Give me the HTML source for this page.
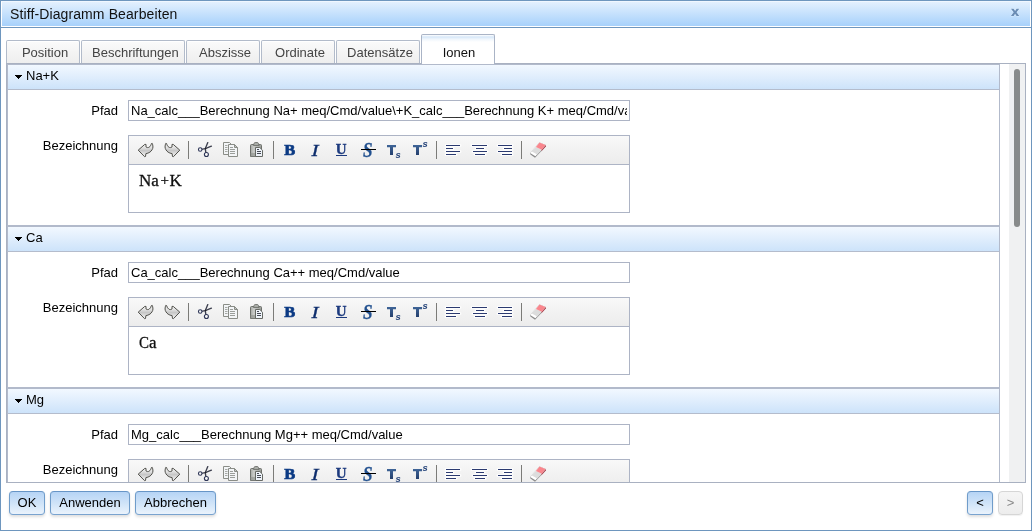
<!DOCTYPE html>
<html>
<head>
<meta charset="utf-8">
<title>Stiff-Diagramm Bearbeiten</title>
<style>
html,body{margin:0;padding:0;}
body{width:1032px;height:531px;overflow:hidden;background:#fff;font-family:"Liberation Sans",sans-serif;font-size:13px;color:#000;position:relative;}
*{box-sizing:border-box;}
#root{position:absolute;left:0;top:0;width:1032px;height:531px;overflow:hidden;will-change:transform;background:#fff;}
#dlg{position:absolute;left:0;top:0;width:1032px;height:531px;border:1px solid #6e96be;background:#fff;}
#title{position:absolute;left:1px;top:1px;width:1030px;height:26px;border:1px solid #fff;border-top-color:#f0f7ff;background:linear-gradient(to bottom,#e3f0fe 0%,#a7d1fb 100%);background-clip:padding-box;}
#titleline{position:absolute;left:1px;top:27px;width:1030px;height:1px;background:#6e96be;}
#titletext{position:absolute;left:10px;top:6px;font-size:14px;line-height:17px;color:#111;white-space:nowrap;letter-spacing:0.11px;}
#close{position:absolute;left:1009px;top:6px;width:12px;height:12px;overflow:visible;}
.tab{position:absolute;top:40px;height:23px;border:1px solid #b2bbca;border-bottom:none;border-radius:2px 2px 0 0;background:linear-gradient(to bottom,#fbfbfb 0%,#f4f4f4 50%,#eeeeee 100%);color:#444;font-size:13px;line-height:15px;padding:4px 6px 0 10px;text-align:center;white-space:nowrap;box-shadow:inset 0 1px 0 rgba(255,255,255,0.85);}
.tab.act{padding-left:9px;padding-right:7px;top:34px;height:30px;background:linear-gradient(to bottom,#fff 0px,#d6e7f8 2px,#eef5fc 4px,#fff 7px,#fff 100%);color:#111;padding-top:10px;border-color:#aab4c6;z-index:3;box-shadow:none;}
#pane{position:absolute;left:6px;top:63px;width:1020px;height:420px;border:1px solid #a9b1c1;background:#fff;overflow:hidden;}
.sec{position:absolute;left:0;width:993px;height:162px;border:1px solid #b2bacb;background:#fff;}
.sec .hd{position:absolute;left:0;top:0;width:991px;height:25px;border-bottom:1px solid #b4bccc;background:linear-gradient(to bottom,#f2f8ff 0%,#cde3fa 100%);}
.sec .tri{position:absolute;left:7px;top:10px;width:7px;height:4px;}
.sec .ht{position:absolute;left:18px;top:3px;line-height:15px;font-size:13px;white-space:nowrap;}
.lbl{position:absolute;left:0;width:110px;text-align:right;font-size:13px;line-height:15px;white-space:nowrap;}
.inp{position:absolute;left:120px;top:35px;width:502px;height:21px;border:1px solid #adb4c5;background:#fff;padding:2px 2px 0 2px;font-size:13px;line-height:15px;white-space:nowrap;overflow:hidden;}
.inp span{display:block;overflow:hidden;width:496px;}
.ed{position:absolute;left:120px;top:70px;width:502px;height:78px;border:1px solid #adb4c5;background:#fff;}
.tb{position:absolute;left:0;top:0;width:500px;height:29px;border-bottom:1px solid #adb4c5;background:linear-gradient(to bottom,#f9f9f9 0%,#f2f2f2 50%,#ececec 100%);}
.edt{position:absolute;left:10px;top:35px;font-family:"Liberation Serif",serif;font-size:17px;line-height:20px;color:#111;white-space:nowrap;-webkit-text-stroke:0.3px #111;transform:scaleY(1.04);transform-origin:0 15.75px;}
.sep{position:absolute;top:5px;width:1px;height:18px;background:#7b7b78;}
.ic{position:absolute;top:6px;width:16px;height:16px;overflow:visible;}
.btn{position:absolute;top:491px;height:24px;border:1px solid #6f9cca;border-color:#6795c6 #6f9cca #79a3cf;border-radius:4px;background:linear-gradient(to bottom,#b6d4f5 0%,#cfe3f8 50%,#eaf3fc 100%);font-size:13px;line-height:15px;text-align:center;padding-top:3px;box-shadow:0 2px 3px rgba(0,0,0,0.13);color:#000;}
#sbtrack{position:absolute;left:1002px;top:0;width:16px;height:418px;background:#f0f1f2;}
#sbthumb{position:absolute;left:1007px;top:5px;width:6px;height:158px;border-radius:3px;background:#888b8b;}
</style>
</head>
<body>
<div id="root">
<svg width="0" height="0" style="position:absolute;left:-100px;top:-100px;">
<defs>
<linearGradient id="gArrow" x1="0" y1="0" x2="0" y2="1"><stop offset="0" stop-color="#ffffff"/><stop offset="0.3" stop-color="#e4e4e4"/><stop offset="0.55" stop-color="#c6c6c6"/><stop offset="0.75" stop-color="#dedede"/><stop offset="1" stop-color="#f0f0f0"/></linearGradient>
<linearGradient id="gT" x1="0" y1="0" x2="0" y2="1"><stop offset="0" stop-color="#3f6598"/><stop offset="1" stop-color="#243f6d"/></linearGradient>
<linearGradient id="gClip" x1="0" y1="0" x2="1" y2="0"><stop offset="0" stop-color="#a4a7a3"/><stop offset="0.3" stop-color="#c9cbc8"/><stop offset="1" stop-color="#9a9d98"/></linearGradient>
</defs>
</svg>
<div id="dlg"></div>
<div id="title"></div>
<div id="titleline"></div>
<div id="titletext">Stiff-Diagramm Bearbeiten</div>
<svg id="close" width="12" height="12" viewBox="0 0 12 12"><path transform="translate(1.9,2.75)" d="M0,0 H2.7 L4.2,2.3 L5.7,0 H8.4 L5.6,3.6 L8.4,7.3 H5.7 L4.2,4.9 L2.7,7.3 H0 L2.8,3.6 Z" fill="#6a8cb4" stroke="#fff" stroke-opacity="0.5" stroke-width="0.9" paint-order="stroke"/></svg>

<div class="tab" style="left:6px;width:74px;">Position</div>
<div class="tab" style="left:81px;width:104px;">Beschriftungen</div>
<div class="tab" style="left:186px;width:74px;">Abszisse</div>
<div class="tab" style="left:261px;width:74px;">Ordinate</div>
<div class="tab" style="left:336px;width:84px;">Datensätze</div>

<div id="pane">
  <div class="sec" style="top:0px;" id="s1">
<div class="hd"><svg class="tri" width="7" height="4" viewBox="0 0 7 4" shape-rendering="crispEdges"><path d="M0,0H7V1H6V2H5V3H4V4H3V3H2V2H1V1H0Z" fill="#000"/></svg><div class="ht">Na+K</div></div><div class="lbl" style="top:38px;">Pfad</div><div class="inp"><span>Na_calc___Berechnung Na+ meq/Cmd/value\+K_calc___Berechnung K+ meq/Cmd/value</span></div><div class="lbl" style="top:73px;">Bezeichnung</div><div class="ed"><div class="tb"><svg class="ic" style="left:9px" width="16" height="16" viewBox="0 0 16 16"><path d="M0.2,8.15 L6.8,2.4 L8.0,2.4 L8.0,5.0 C9.0,5.7 10.2,5.7 11.0,5.3 C12.2,4.6 13.0,3.2 13.35,1.7 L14.05,1.15 C14.6,2.0 15.0,3.5 14.95,5.0 C14.9,6.0 14.6,6.9 14.05,7.8 C13.5,8.7 12.8,9.5 11.95,10.1 C10.8,10.9 9.4,11.4 7.9,11.6 L7.5,14.5 L6.6,14.7 Z" fill="url(#gArrow)" stroke="#50504b" stroke-width="1" stroke-linejoin="miter"/></svg><svg class="ic" style="left:35px" width="16" height="16" viewBox="0 0 16 16"><g transform="translate(16,0) scale(-1,1)"><path d="M0.2,8.15 L6.8,2.4 L8.0,2.4 L8.0,5.0 C9.0,5.7 10.2,5.7 11.0,5.3 C12.2,4.6 13.0,3.2 13.35,1.7 L14.05,1.15 C14.6,2.0 15.0,3.5 14.95,5.0 C14.9,6.0 14.6,6.9 14.05,7.8 C13.5,8.7 12.8,9.5 11.95,10.1 C10.8,10.9 9.4,11.4 7.9,11.6 L7.5,14.5 L6.6,14.7 Z" fill="url(#gArrow)" stroke="#50504b" stroke-width="1" stroke-linejoin="miter"/></g></svg><svg class="ic" style="left:68px" width="16" height="16" viewBox="0 0 16 16"><path d="M8.8,10.3 L8.3,6.6 L10.8,0.6" fill="none" stroke="#3c3f4e" stroke-width="1.35" stroke-linecap="round"/><path d="M5.5,7.2 L8.3,6.6 L14.4,4.2" fill="none" stroke="#3c3f4e" stroke-width="1.35" stroke-linecap="round"/><circle cx="8.5" cy="6.5" r="0.8" fill="#1c1c22"/><circle cx="3.2" cy="7.5" r="1.75" fill="#f6f6f6" stroke="#2d3557" stroke-width="1.1"/><circle cx="9.4" cy="12.5" r="2.0" fill="#f6f6f6" stroke="#2d3557" stroke-width="1.1"/></svg><svg class="ic" style="left:94px" width="16" height="16" viewBox="0 0 16 16"><path d="M0.5,0.5 H6.5 L8.5,2.5 V12.5 H0.5 Z" fill="#f3f5f7" stroke="#8a8d87" stroke-width="1"/><path d="M2,3.5 H4.5 M2,5.5 H4.5 M2,7.5 H4.5 M2,9.5 H4.5" stroke="#a6a9a5" stroke-width="1"/><path d="M5.5,2.5 H11.5 L14.5,5.5 V14.5 H5.5 Z" fill="#f3f5f7" stroke="#8a8d87" stroke-width="1"/><path d="M11.5,2.5 V5.5 H14.5 Z" fill="#c6c9c5" stroke="#8a8d87" stroke-width="1" stroke-linejoin="round"/><path d="M7,5.5 H10 M7,7.5 H12 M7,9.5 H12 M7,11.5 H12" stroke="#9b9e9a" stroke-width="1"/></svg><svg class="ic" style="left:120px" width="16" height="16" viewBox="0 0 16 16"><path d="M2.5,2.5 H11.5 Q12.5,2.5 12.5,3.5 V14.5 H1.5 V3.5 Q1.5,2.5 2.5,2.5 Z" fill="url(#gClip)" stroke="#6d706b" stroke-width="1"/><path d="M1.5,11 H7 V14.5 H1.5 Z" fill="#8e918c" opacity="0.6"/><path d="M4.4,3.5 L5.2,1.2 Q5.4,0.5 6.2,0.5 H8.3 Q9.1,0.5 9.3,1.2 L10.1,3.5 Z" fill="#a9aca7" stroke="#6f726d" stroke-width="0.9"/><path d="M6.5,5.5 H10.8 L13.5,8.2 V14.5 H6.5 Z" fill="#eef3f9" stroke="#666964" stroke-width="1"/><path d="M8,7.5 H10 M8,9.5 H12 M8,11.5 H12" stroke="#474b55" stroke-width="1"/></svg><svg class="ic" style="left:153px" width="16" height="16" viewBox="0 0 16 16"><g transform="translate(2.2,0) scale(1.06,1)"><text x="0" y="13.0" font-family="Liberation Serif, serif" font-weight="bold" font-size="15.5" fill="#0b3a84" stroke="#0b3a84" stroke-width="0.7">B</text></g></svg><svg class="ic" style="left:179px" width="16" height="16" viewBox="0 0 16 16"><g transform="translate(3.6,0) scale(1.25,1)"><text x="0" y="13.7" font-family="Liberation Serif, serif" font-style="italic" font-size="17" fill="#0d2d6c" stroke="#0d2d6c" stroke-width="0.3">I</text></g></svg><svg class="ic" style="left:205px" width="16" height="16" viewBox="0 0 16 16"><text x="1.7" y="11.8" font-family="Liberation Serif, serif" font-weight="bold" font-size="15" fill="#1c3a7e" stroke="#1c3a7e" stroke-width="0.35">U</text><rect x="2" y="13" width="11" height="1" fill="#1c3a7e"/></svg><svg class="ic" style="left:231px" width="16" height="16" viewBox="0 0 16 16"><g transform="translate(3,0) scale(0.86,1)"><text x="0" y="14.7" font-family="Liberation Serif, serif" font-style="italic" font-weight="bold" font-size="20" fill="#21508f" stroke="#21508f" stroke-width="0.3">S</text></g><rect x="1" y="7" width="15" height="1" fill="#000"/></svg><svg class="ic" style="left:257px" width="16" height="16" viewBox="0 0 16 16"><path d="M1,3 H10 V5.3 H7 V13 H4 V5.3 H1 Z" fill="url(#gT)"/><text x="9.6" y="15.9" font-family="Liberation Sans, sans-serif" font-style="italic" font-weight="bold" font-size="9.5" fill="#27457a">s</text></svg><svg class="ic" style="left:283px" width="16" height="16" viewBox="0 0 16 16"><path d="M1,3 H10 V5.3 H7 V13 H4 V5.3 H1 Z" fill="url(#gT)"/><text x="10.6" y="4.9" font-family="Liberation Sans, sans-serif" font-style="italic" font-weight="bold" font-size="9.5" fill="#27457a">s</text></svg><svg class="ic" style="left:316px" width="16" height="16" viewBox="0 0 16 16"><path d="M0,2.5H16V4.5H0Z M0,5.5H9V7.5H0Z M0,8.5H16V10.5H0Z M0,11.5H12V13.5H0Z" fill="#fff" opacity="0.0"/><path d="M1,3.5H15 M1,6.5H8 M1,9.5H15 M1,12.5H11" stroke="#fff" stroke-width="3" stroke-linecap="round" opacity="0.8"/><path d="M1,3.5H15 M1,6.5H8 M1,9.5H15 M1,12.5H11" stroke="#2b3a70" stroke-width="1"/></svg><svg class="ic" style="left:342px" width="16" height="16" viewBox="0 0 16 16"><path d="M1,3.5H16 M5,6.5H13 M2,9.5H16 M4,12.5H14" stroke="#fff" stroke-width="3" stroke-linecap="round" opacity="0.8"/><path d="M1,3.5H16 M5,6.5H13 M2,9.5H16 M4,12.5H14" stroke="#2b3a70" stroke-width="1"/></svg><svg class="ic" style="left:368px" width="16" height="16" viewBox="0 0 16 16"><path d="M1,3.5H15 M7,6.5H15 M1,9.5H15 M5,12.5H15" stroke="#fff" stroke-width="3" stroke-linecap="round" opacity="0.8"/><path d="M1,3.5H15 M7,6.5H15 M1,9.5H15 M5,12.5H15" stroke="#2b3a70" stroke-width="1"/></svg><svg class="ic" style="left:401px" width="16" height="16" viewBox="0 0 16 16"><path d="M9.5,0.4 L15.8,3.1 L15.8,4.6 L5.0,15.7 L0.4,12.6 L0.1,10.9 Z" fill="#8d8d8d"/><path d="M15.8,3.1 L15.8,4.6 L11.4,9.2 L11.6,7.7 Z" fill="#b2404e"/><path d="M9.5,0.4 L15.6,3.0 L5.4,14.2 L0.1,10.9 Z" fill="#fff"/><path d="M5.9,5.0 L11.7,7.7 L7.3,12.4 L1.4,9.3 Z" fill="#dcdcdc"/><path d="M9.5,0.4 L15.6,3.0 L11.7,7.7 L5.9,5.0 Z" fill="#f9868d"/></svg><div class="sep" style="left:59px"></div><div class="sep" style="left:144px"></div><div class="sep" style="left:307px"></div><div class="sep" style="left:392px"></div></div><div class="edt">Na<span style="font-size:15px;position:relative;top:-1px;margin:0 0.5px 0 1.7px;">+</span>K</div></div>
</div>
  <div class="sec" style="top:162px;" id="s2">
<div class="hd"><svg class="tri" width="7" height="4" viewBox="0 0 7 4" shape-rendering="crispEdges"><path d="M0,0H7V1H6V2H5V3H4V4H3V3H2V2H1V1H0Z" fill="#000"/></svg><div class="ht">Ca</div></div><div class="lbl" style="top:38px;">Pfad</div><div class="inp"><span>Ca_calc___Berechnung Ca++ meq/Cmd/value</span></div><div class="lbl" style="top:73px;">Bezeichnung</div><div class="ed"><div class="tb"><svg class="ic" style="left:9px" width="16" height="16" viewBox="0 0 16 16"><path d="M0.2,8.15 L6.8,2.4 L8.0,2.4 L8.0,5.0 C9.0,5.7 10.2,5.7 11.0,5.3 C12.2,4.6 13.0,3.2 13.35,1.7 L14.05,1.15 C14.6,2.0 15.0,3.5 14.95,5.0 C14.9,6.0 14.6,6.9 14.05,7.8 C13.5,8.7 12.8,9.5 11.95,10.1 C10.8,10.9 9.4,11.4 7.9,11.6 L7.5,14.5 L6.6,14.7 Z" fill="url(#gArrow)" stroke="#50504b" stroke-width="1" stroke-linejoin="miter"/></svg><svg class="ic" style="left:35px" width="16" height="16" viewBox="0 0 16 16"><g transform="translate(16,0) scale(-1,1)"><path d="M0.2,8.15 L6.8,2.4 L8.0,2.4 L8.0,5.0 C9.0,5.7 10.2,5.7 11.0,5.3 C12.2,4.6 13.0,3.2 13.35,1.7 L14.05,1.15 C14.6,2.0 15.0,3.5 14.95,5.0 C14.9,6.0 14.6,6.9 14.05,7.8 C13.5,8.7 12.8,9.5 11.95,10.1 C10.8,10.9 9.4,11.4 7.9,11.6 L7.5,14.5 L6.6,14.7 Z" fill="url(#gArrow)" stroke="#50504b" stroke-width="1" stroke-linejoin="miter"/></g></svg><svg class="ic" style="left:68px" width="16" height="16" viewBox="0 0 16 16"><path d="M8.8,10.3 L8.3,6.6 L10.8,0.6" fill="none" stroke="#3c3f4e" stroke-width="1.35" stroke-linecap="round"/><path d="M5.5,7.2 L8.3,6.6 L14.4,4.2" fill="none" stroke="#3c3f4e" stroke-width="1.35" stroke-linecap="round"/><circle cx="8.5" cy="6.5" r="0.8" fill="#1c1c22"/><circle cx="3.2" cy="7.5" r="1.75" fill="#f6f6f6" stroke="#2d3557" stroke-width="1.1"/><circle cx="9.4" cy="12.5" r="2.0" fill="#f6f6f6" stroke="#2d3557" stroke-width="1.1"/></svg><svg class="ic" style="left:94px" width="16" height="16" viewBox="0 0 16 16"><path d="M0.5,0.5 H6.5 L8.5,2.5 V12.5 H0.5 Z" fill="#f3f5f7" stroke="#8a8d87" stroke-width="1"/><path d="M2,3.5 H4.5 M2,5.5 H4.5 M2,7.5 H4.5 M2,9.5 H4.5" stroke="#a6a9a5" stroke-width="1"/><path d="M5.5,2.5 H11.5 L14.5,5.5 V14.5 H5.5 Z" fill="#f3f5f7" stroke="#8a8d87" stroke-width="1"/><path d="M11.5,2.5 V5.5 H14.5 Z" fill="#c6c9c5" stroke="#8a8d87" stroke-width="1" stroke-linejoin="round"/><path d="M7,5.5 H10 M7,7.5 H12 M7,9.5 H12 M7,11.5 H12" stroke="#9b9e9a" stroke-width="1"/></svg><svg class="ic" style="left:120px" width="16" height="16" viewBox="0 0 16 16"><path d="M2.5,2.5 H11.5 Q12.5,2.5 12.5,3.5 V14.5 H1.5 V3.5 Q1.5,2.5 2.5,2.5 Z" fill="url(#gClip)" stroke="#6d706b" stroke-width="1"/><path d="M1.5,11 H7 V14.5 H1.5 Z" fill="#8e918c" opacity="0.6"/><path d="M4.4,3.5 L5.2,1.2 Q5.4,0.5 6.2,0.5 H8.3 Q9.1,0.5 9.3,1.2 L10.1,3.5 Z" fill="#a9aca7" stroke="#6f726d" stroke-width="0.9"/><path d="M6.5,5.5 H10.8 L13.5,8.2 V14.5 H6.5 Z" fill="#eef3f9" stroke="#666964" stroke-width="1"/><path d="M8,7.5 H10 M8,9.5 H12 M8,11.5 H12" stroke="#474b55" stroke-width="1"/></svg><svg class="ic" style="left:153px" width="16" height="16" viewBox="0 0 16 16"><g transform="translate(2.2,0) scale(1.06,1)"><text x="0" y="13.0" font-family="Liberation Serif, serif" font-weight="bold" font-size="15.5" fill="#0b3a84" stroke="#0b3a84" stroke-width="0.7">B</text></g></svg><svg class="ic" style="left:179px" width="16" height="16" viewBox="0 0 16 16"><g transform="translate(3.6,0) scale(1.25,1)"><text x="0" y="13.7" font-family="Liberation Serif, serif" font-style="italic" font-size="17" fill="#0d2d6c" stroke="#0d2d6c" stroke-width="0.3">I</text></g></svg><svg class="ic" style="left:205px" width="16" height="16" viewBox="0 0 16 16"><text x="1.7" y="11.8" font-family="Liberation Serif, serif" font-weight="bold" font-size="15" fill="#1c3a7e" stroke="#1c3a7e" stroke-width="0.35">U</text><rect x="2" y="13" width="11" height="1" fill="#1c3a7e"/></svg><svg class="ic" style="left:231px" width="16" height="16" viewBox="0 0 16 16"><g transform="translate(3,0) scale(0.86,1)"><text x="0" y="14.7" font-family="Liberation Serif, serif" font-style="italic" font-weight="bold" font-size="20" fill="#21508f" stroke="#21508f" stroke-width="0.3">S</text></g><rect x="1" y="7" width="15" height="1" fill="#000"/></svg><svg class="ic" style="left:257px" width="16" height="16" viewBox="0 0 16 16"><path d="M1,3 H10 V5.3 H7 V13 H4 V5.3 H1 Z" fill="url(#gT)"/><text x="9.6" y="15.9" font-family="Liberation Sans, sans-serif" font-style="italic" font-weight="bold" font-size="9.5" fill="#27457a">s</text></svg><svg class="ic" style="left:283px" width="16" height="16" viewBox="0 0 16 16"><path d="M1,3 H10 V5.3 H7 V13 H4 V5.3 H1 Z" fill="url(#gT)"/><text x="10.6" y="4.9" font-family="Liberation Sans, sans-serif" font-style="italic" font-weight="bold" font-size="9.5" fill="#27457a">s</text></svg><svg class="ic" style="left:316px" width="16" height="16" viewBox="0 0 16 16"><path d="M0,2.5H16V4.5H0Z M0,5.5H9V7.5H0Z M0,8.5H16V10.5H0Z M0,11.5H12V13.5H0Z" fill="#fff" opacity="0.0"/><path d="M1,3.5H15 M1,6.5H8 M1,9.5H15 M1,12.5H11" stroke="#fff" stroke-width="3" stroke-linecap="round" opacity="0.8"/><path d="M1,3.5H15 M1,6.5H8 M1,9.5H15 M1,12.5H11" stroke="#2b3a70" stroke-width="1"/></svg><svg class="ic" style="left:342px" width="16" height="16" viewBox="0 0 16 16"><path d="M1,3.5H16 M5,6.5H13 M2,9.5H16 M4,12.5H14" stroke="#fff" stroke-width="3" stroke-linecap="round" opacity="0.8"/><path d="M1,3.5H16 M5,6.5H13 M2,9.5H16 M4,12.5H14" stroke="#2b3a70" stroke-width="1"/></svg><svg class="ic" style="left:368px" width="16" height="16" viewBox="0 0 16 16"><path d="M1,3.5H15 M7,6.5H15 M1,9.5H15 M5,12.5H15" stroke="#fff" stroke-width="3" stroke-linecap="round" opacity="0.8"/><path d="M1,3.5H15 M7,6.5H15 M1,9.5H15 M5,12.5H15" stroke="#2b3a70" stroke-width="1"/></svg><svg class="ic" style="left:401px" width="16" height="16" viewBox="0 0 16 16"><path d="M9.5,0.4 L15.8,3.1 L15.8,4.6 L5.0,15.7 L0.4,12.6 L0.1,10.9 Z" fill="#8d8d8d"/><path d="M15.8,3.1 L15.8,4.6 L11.4,9.2 L11.6,7.7 Z" fill="#b2404e"/><path d="M9.5,0.4 L15.6,3.0 L5.4,14.2 L0.1,10.9 Z" fill="#fff"/><path d="M5.9,5.0 L11.7,7.7 L7.3,12.4 L1.4,9.3 Z" fill="#dcdcdc"/><path d="M9.5,0.4 L15.6,3.0 L11.7,7.7 L5.9,5.0 Z" fill="#f9868d"/></svg><div class="sep" style="left:59px"></div><div class="sep" style="left:144px"></div><div class="sep" style="left:307px"></div><div class="sep" style="left:392px"></div></div><div class="edt"><span style="display:inline-block;transform:scaleX(0.88);transform-origin:0 0;margin-right:-1.3px;">C</span>a</div></div>
</div>
  <div class="sec" style="top:324px;" id="s3">
<div class="hd"><svg class="tri" width="7" height="4" viewBox="0 0 7 4" shape-rendering="crispEdges"><path d="M0,0H7V1H6V2H5V3H4V4H3V3H2V2H1V1H0Z" fill="#000"/></svg><div class="ht">Mg</div></div><div class="lbl" style="top:38px;">Pfad</div><div class="inp"><span>Mg_calc___Berechnung Mg++ meq/Cmd/value</span></div><div class="lbl" style="top:73px;">Bezeichnung</div><div class="ed"><div class="tb"><svg class="ic" style="left:9px" width="16" height="16" viewBox="0 0 16 16"><path d="M0.2,8.15 L6.8,2.4 L8.0,2.4 L8.0,5.0 C9.0,5.7 10.2,5.7 11.0,5.3 C12.2,4.6 13.0,3.2 13.35,1.7 L14.05,1.15 C14.6,2.0 15.0,3.5 14.95,5.0 C14.9,6.0 14.6,6.9 14.05,7.8 C13.5,8.7 12.8,9.5 11.95,10.1 C10.8,10.9 9.4,11.4 7.9,11.6 L7.5,14.5 L6.6,14.7 Z" fill="url(#gArrow)" stroke="#50504b" stroke-width="1" stroke-linejoin="miter"/></svg><svg class="ic" style="left:35px" width="16" height="16" viewBox="0 0 16 16"><g transform="translate(16,0) scale(-1,1)"><path d="M0.2,8.15 L6.8,2.4 L8.0,2.4 L8.0,5.0 C9.0,5.7 10.2,5.7 11.0,5.3 C12.2,4.6 13.0,3.2 13.35,1.7 L14.05,1.15 C14.6,2.0 15.0,3.5 14.95,5.0 C14.9,6.0 14.6,6.9 14.05,7.8 C13.5,8.7 12.8,9.5 11.95,10.1 C10.8,10.9 9.4,11.4 7.9,11.6 L7.5,14.5 L6.6,14.7 Z" fill="url(#gArrow)" stroke="#50504b" stroke-width="1" stroke-linejoin="miter"/></g></svg><svg class="ic" style="left:68px" width="16" height="16" viewBox="0 0 16 16"><path d="M8.8,10.3 L8.3,6.6 L10.8,0.6" fill="none" stroke="#3c3f4e" stroke-width="1.35" stroke-linecap="round"/><path d="M5.5,7.2 L8.3,6.6 L14.4,4.2" fill="none" stroke="#3c3f4e" stroke-width="1.35" stroke-linecap="round"/><circle cx="8.5" cy="6.5" r="0.8" fill="#1c1c22"/><circle cx="3.2" cy="7.5" r="1.75" fill="#f6f6f6" stroke="#2d3557" stroke-width="1.1"/><circle cx="9.4" cy="12.5" r="2.0" fill="#f6f6f6" stroke="#2d3557" stroke-width="1.1"/></svg><svg class="ic" style="left:94px" width="16" height="16" viewBox="0 0 16 16"><path d="M0.5,0.5 H6.5 L8.5,2.5 V12.5 H0.5 Z" fill="#f3f5f7" stroke="#8a8d87" stroke-width="1"/><path d="M2,3.5 H4.5 M2,5.5 H4.5 M2,7.5 H4.5 M2,9.5 H4.5" stroke="#a6a9a5" stroke-width="1"/><path d="M5.5,2.5 H11.5 L14.5,5.5 V14.5 H5.5 Z" fill="#f3f5f7" stroke="#8a8d87" stroke-width="1"/><path d="M11.5,2.5 V5.5 H14.5 Z" fill="#c6c9c5" stroke="#8a8d87" stroke-width="1" stroke-linejoin="round"/><path d="M7,5.5 H10 M7,7.5 H12 M7,9.5 H12 M7,11.5 H12" stroke="#9b9e9a" stroke-width="1"/></svg><svg class="ic" style="left:120px" width="16" height="16" viewBox="0 0 16 16"><path d="M2.5,2.5 H11.5 Q12.5,2.5 12.5,3.5 V14.5 H1.5 V3.5 Q1.5,2.5 2.5,2.5 Z" fill="url(#gClip)" stroke="#6d706b" stroke-width="1"/><path d="M1.5,11 H7 V14.5 H1.5 Z" fill="#8e918c" opacity="0.6"/><path d="M4.4,3.5 L5.2,1.2 Q5.4,0.5 6.2,0.5 H8.3 Q9.1,0.5 9.3,1.2 L10.1,3.5 Z" fill="#a9aca7" stroke="#6f726d" stroke-width="0.9"/><path d="M6.5,5.5 H10.8 L13.5,8.2 V14.5 H6.5 Z" fill="#eef3f9" stroke="#666964" stroke-width="1"/><path d="M8,7.5 H10 M8,9.5 H12 M8,11.5 H12" stroke="#474b55" stroke-width="1"/></svg><svg class="ic" style="left:153px" width="16" height="16" viewBox="0 0 16 16"><g transform="translate(2.2,0) scale(1.06,1)"><text x="0" y="13.0" font-family="Liberation Serif, serif" font-weight="bold" font-size="15.5" fill="#0b3a84" stroke="#0b3a84" stroke-width="0.7">B</text></g></svg><svg class="ic" style="left:179px" width="16" height="16" viewBox="0 0 16 16"><g transform="translate(3.6,0) scale(1.25,1)"><text x="0" y="13.7" font-family="Liberation Serif, serif" font-style="italic" font-size="17" fill="#0d2d6c" stroke="#0d2d6c" stroke-width="0.3">I</text></g></svg><svg class="ic" style="left:205px" width="16" height="16" viewBox="0 0 16 16"><text x="1.7" y="11.8" font-family="Liberation Serif, serif" font-weight="bold" font-size="15" fill="#1c3a7e" stroke="#1c3a7e" stroke-width="0.35">U</text><rect x="2" y="13" width="11" height="1" fill="#1c3a7e"/></svg><svg class="ic" style="left:231px" width="16" height="16" viewBox="0 0 16 16"><g transform="translate(3,0) scale(0.86,1)"><text x="0" y="14.7" font-family="Liberation Serif, serif" font-style="italic" font-weight="bold" font-size="20" fill="#21508f" stroke="#21508f" stroke-width="0.3">S</text></g><rect x="1" y="7" width="15" height="1" fill="#000"/></svg><svg class="ic" style="left:257px" width="16" height="16" viewBox="0 0 16 16"><path d="M1,3 H10 V5.3 H7 V13 H4 V5.3 H1 Z" fill="url(#gT)"/><text x="9.6" y="15.9" font-family="Liberation Sans, sans-serif" font-style="italic" font-weight="bold" font-size="9.5" fill="#27457a">s</text></svg><svg class="ic" style="left:283px" width="16" height="16" viewBox="0 0 16 16"><path d="M1,3 H10 V5.3 H7 V13 H4 V5.3 H1 Z" fill="url(#gT)"/><text x="10.6" y="4.9" font-family="Liberation Sans, sans-serif" font-style="italic" font-weight="bold" font-size="9.5" fill="#27457a">s</text></svg><svg class="ic" style="left:316px" width="16" height="16" viewBox="0 0 16 16"><path d="M0,2.5H16V4.5H0Z M0,5.5H9V7.5H0Z M0,8.5H16V10.5H0Z M0,11.5H12V13.5H0Z" fill="#fff" opacity="0.0"/><path d="M1,3.5H15 M1,6.5H8 M1,9.5H15 M1,12.5H11" stroke="#fff" stroke-width="3" stroke-linecap="round" opacity="0.8"/><path d="M1,3.5H15 M1,6.5H8 M1,9.5H15 M1,12.5H11" stroke="#2b3a70" stroke-width="1"/></svg><svg class="ic" style="left:342px" width="16" height="16" viewBox="0 0 16 16"><path d="M1,3.5H16 M5,6.5H13 M2,9.5H16 M4,12.5H14" stroke="#fff" stroke-width="3" stroke-linecap="round" opacity="0.8"/><path d="M1,3.5H16 M5,6.5H13 M2,9.5H16 M4,12.5H14" stroke="#2b3a70" stroke-width="1"/></svg><svg class="ic" style="left:368px" width="16" height="16" viewBox="0 0 16 16"><path d="M1,3.5H15 M7,6.5H15 M1,9.5H15 M5,12.5H15" stroke="#fff" stroke-width="3" stroke-linecap="round" opacity="0.8"/><path d="M1,3.5H15 M7,6.5H15 M1,9.5H15 M5,12.5H15" stroke="#2b3a70" stroke-width="1"/></svg><svg class="ic" style="left:401px" width="16" height="16" viewBox="0 0 16 16"><path d="M9.5,0.4 L15.8,3.1 L15.8,4.6 L5.0,15.7 L0.4,12.6 L0.1,10.9 Z" fill="#8d8d8d"/><path d="M15.8,3.1 L15.8,4.6 L11.4,9.2 L11.6,7.7 Z" fill="#b2404e"/><path d="M9.5,0.4 L15.6,3.0 L5.4,14.2 L0.1,10.9 Z" fill="#fff"/><path d="M5.9,5.0 L11.7,7.7 L7.3,12.4 L1.4,9.3 Z" fill="#dcdcdc"/><path d="M9.5,0.4 L15.6,3.0 L11.7,7.7 L5.9,5.0 Z" fill="#f9868d"/></svg><div class="sep" style="left:59px"></div><div class="sep" style="left:144px"></div><div class="sep" style="left:307px"></div><div class="sep" style="left:392px"></div></div><div class="edt">Mg</div></div>
</div>
  <div id="sbtrack"></div>
  <div id="sbthumb"></div>
</div>
<div class="tab act" style="left:421px;width:74px;">Ionen</div>

<div class="btn" style="left:9px;width:36px;">OK</div>
<div class="btn" style="left:50px;width:80px;">Anwenden</div>
<div class="btn" style="left:135px;width:81px;">Abbrechen</div>
<div class="btn" style="left:967px;width:26px;">&lt;</div>
<div class="btn" style="left:998px;width:25px;border-color:#d6d6d6;background:linear-gradient(to bottom,#f5f5f5,#ededed);color:#888;box-shadow:0 1px 1px rgba(0,0,0,0.06);">&gt;</div>
</div>
</body>
</html>
